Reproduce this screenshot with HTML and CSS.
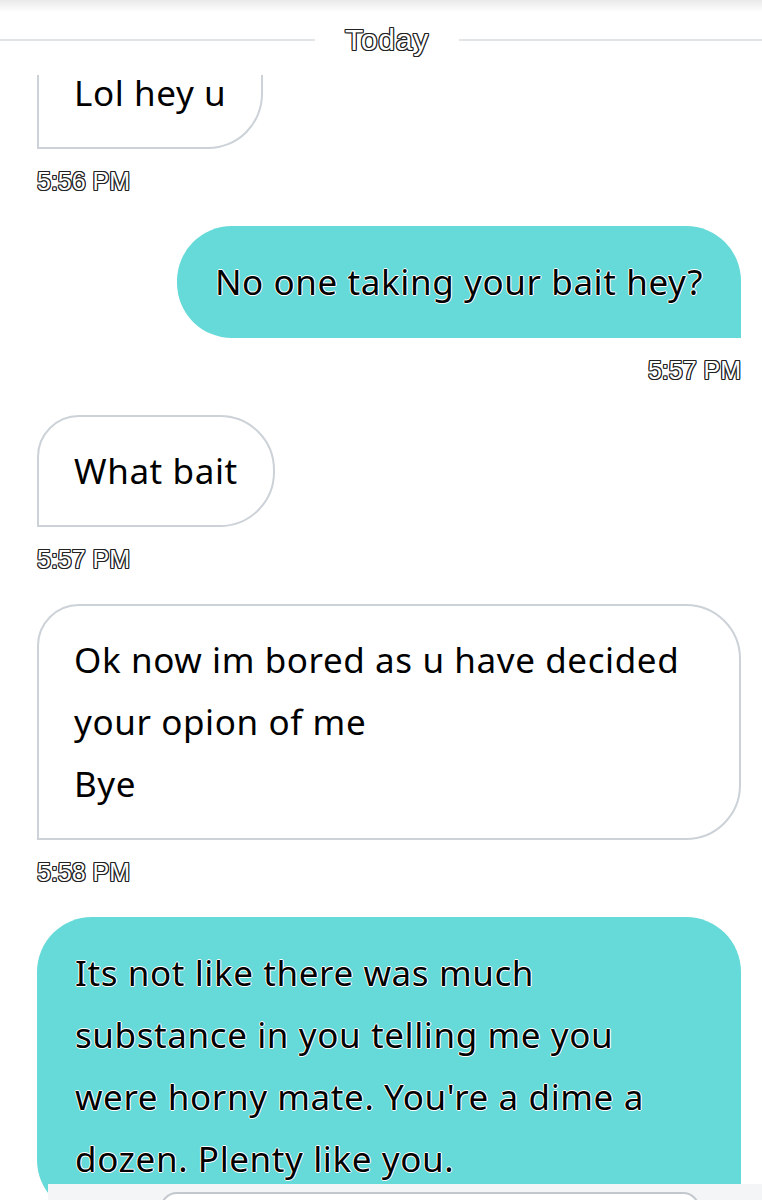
FILE: index.html
```html
<!DOCTYPE html>
<html lang="en">
<head>
    <meta charset="UTF-8">
    <meta name="viewport" content="width=device-width, initial-scale=1.0">
    <title>Chat</title>
    <link rel="stylesheet" href="styles.css">
</head>
<body>
    <div class="chat">
        <div class="day-divider">
            <span class="line left"></span>
            <span class="day">Today</span>
            <span class="line"></span>
        </div>
        <div class="messages">
            <div class="msg received first">Lol hey u</div>
            <div class="time">5:56 PM</div>

            <div class="msg sent">No one taking your bait hey?</div>
            <div class="time right">5:57 PM</div>

            <div class="msg received">What bait</div>
            <div class="time">5:57 PM</div>

            <div class="msg received wide">Ok now im bored as u have decided<br>your opion of me<br>Bye</div>
            <div class="time">5:58 PM</div>

            <div class="msg sent wide">Its not like there was much<br>substance in you telling me you<br>were horny mate. You're a dime a<br>dozen. Plenty like you.</div>
        </div>
        <div class="composer">
            <div class="input"></div>
        </div>
    </div>
</body>
</html>
```

FILE: styles.css
```css
body {
    margin: 0;
    padding: 0;
    background-color: #fff;
    font-family: "Noto Sans", "Open Sans", sans-serif;
    overflow: hidden;
}
.chat {
    width: 762px;
    height: 1200px;
    overflow: hidden;
    position: relative;
}
.day-divider {
    box-sizing: border-box;
    height: 75px;
    padding-top: 5px;
    display: flex;
    align-items: center;
    gap: 30px;
    background: linear-gradient(#e9e9e9, #fff 12px);
    position: relative;
    z-index: 1;
}
.day-divider .line {
    flex: 1;
    height: 2px;
    background-color: #e2e5e8;
}
.day-divider .line.left {
    flex: 0 0 315px;
}
.day {
    font-family: "Liberation Sans", Arial, sans-serif;
    font-size: 30px;
    color: #fff;
    text-shadow: 1px 0 0 #222, -1px 0 0 #222, 0 1px 0 #222, 0 -1px 0 #222,
                 1px 1px 0 #222, -1px -1px 0 #222, 1px -1px 0 #222, -1px 1px 0 #222;
    letter-spacing: 0.8px;
}
.messages {
    display: flex;
    flex-direction: column;
    padding: 0 21px 0 37px;
}
.msg {
    font-size: 35px;
    letter-spacing: 0.6px;
    line-height: 62px;
    padding: 25px 38px;
    border-radius: 55px;
    color: #000;
    white-space: nowrap;
}
.msg.received {
    align-self: flex-start;
    border: 2px solid #ccd2d8;
    border-top-left-radius: 42px;
    border-bottom-left-radius: 0;
    padding: 23px 35px;
}
.msg.sent {
    align-self: flex-end;
    background-color: #66d9d9;
    border-bottom-right-radius: 0;
    text-shadow: 1px 0 0 #fff, -1px 0 0 #fff, 0 1px 0 #fff, 0 -1px 0 #fff;
}
.msg.wide {
    align-self: stretch;
}
.msg.first {
    margin-top: -38px;
    border-top-left-radius: 0;
    border-top-right-radius: 0;
    border-top-color: transparent;
}
.time {
    font-family: "Liberation Sans", Arial, sans-serif;
    font-size: 25px;
    line-height: 28px;
    margin: 18px 0 31px;
    color: #fff;
    text-shadow: 1px 0 0 #222, -1px 0 0 #222, 0 1px 0 #222, 0 -1px 0 #222,
                 1px 1px 0 #222, -1px -1px 0 #222, 1px -1px 0 #222, -1px 1px 0 #222;
}
.time.right {
    text-align: right;
}
.composer {
    position: absolute;
    left: 48px;
    right: 0;
    bottom: 0;
    height: 16px;
    background-color: #f4f5f6;
}
.composer .input {
    margin: 8px 62px 0 112px;
    height: 30px;
    border: 2px solid #c2c8ce;
    border-radius: 24px;
    background-color: #fff;
}
```
